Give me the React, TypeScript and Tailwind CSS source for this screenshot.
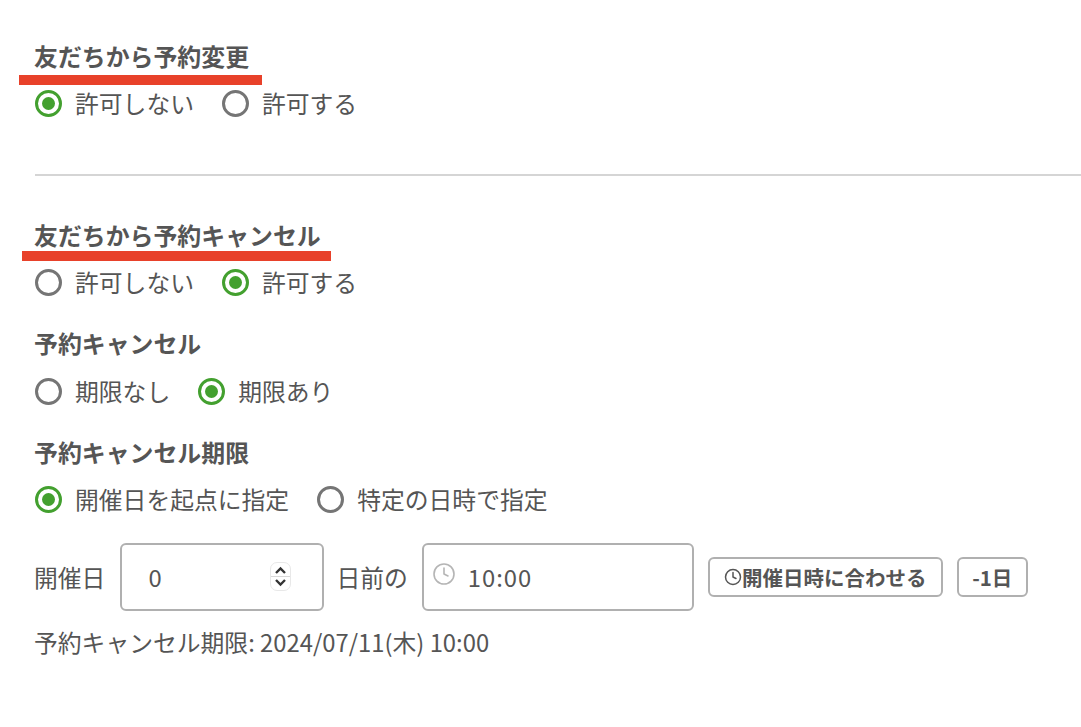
import { Clock } from 'lucide-react'

function Radio({ label, checked }: { label: string; checked?: boolean }) {
  return (
    <label className="flex items-center gap-[13px]">
      <span
        className={
          'flex h-[27px] w-[27px] items-center justify-center rounded-full border-[3px] ' +
          (checked ? 'border-[#43a02f]' : 'border-[#757575]')
        }
      >
        {checked && <span className="h-[13px] w-[13px] rounded-full bg-[#43a02f]" />}
      </span>
      <span>{label}</span>
    </label>
  )
}

function Title({ children }: { children: string }) {
  return <h3 className="-ml-[1px] h-[34px] text-[23.9px] leading-[34px] font-bold">{children}</h3>
}

export default function App() {
  return (
    <div className="relative h-[727px] w-[1081px] overflow-hidden bg-white pl-[35px] pt-[39px] text-[23.8px] leading-[34px] text-[#555555] [font-family:'Noto_Sans_CJK_JP',sans-serif]">
      <Title>友だちから予約変更</Title>
      <div className="mt-[13px] flex gap-[28px]">
        <Radio label="許可しない" checked />
        <Radio label="許可する" />
      </div>

      <div className="mt-[54px] h-[2px] bg-[#d5d5d5]" />

      <div className="mt-[42px]">
        <Title>友だちから予約キャンセル</Title>
      </div>
      <div className="mt-[13px] flex gap-[28px]">
        <Radio label="許可しない" />
        <Radio label="許可する" checked />
      </div>

      <div className="mt-[27px]">
        <Title>予約キャンセル</Title>
      </div>
      <div className="mt-[14px] flex gap-[28px]">
        <Radio label="期限なし" />
        <Radio label="期限あり" checked />
      </div>

      <div className="mt-[27px]">
        <Title>予約キャンセル期限</Title>
      </div>
      <div className="mt-[13px] flex gap-[28px]">
        <Radio label="開催日を起点に指定" checked />
        <Radio label="特定の日時で指定" />
      </div>

      <div className="mt-[27px] flex items-center">
        <span className="-ml-[1px]">開催日</span>
        <div className="ml-[15px] flex h-[68px] w-[204px] items-center justify-between rounded-[6px] border-2 border-[#b0b0b0] pl-[26px] pr-[31px]">
          <span>0</span>
          <span className="mb-[2px] flex h-[29px] w-[21px] flex-col items-center justify-center rounded-[7px] border border-[#e8e8e8] text-[#333333]">
            <svg width="13" height="9" viewBox="0 0 13 9" fill="none" stroke="currentColor" strokeWidth="2.4">
              <path d="M2 7l4.5-4.5L11 7" />
            </svg>
            <span className="my-[1px] h-px w-full bg-[#d8d8d8]" />
            <svg width="13" height="9" viewBox="0 0 13 9" fill="none" stroke="currentColor" strokeWidth="2.4">
              <path d="M2 2l4.5 4.5L11 2" />
            </svg>
          </span>
        </div>
        <span className="ml-[12px]">日前の</span>
        <div className="ml-[14px] flex h-[68px] w-[272px] items-center rounded-[6px] border-2 border-[#b0b0b0] pl-[8px]">
          <Clock size={24} strokeWidth={1.6} className="mb-[6px] text-[#b5b5b5]" />
          <span className="ml-[12px] tracking-[1px]">10:00</span>
        </div>
        <button className="ml-[14px] flex h-[40px] w-[235px] items-center justify-center rounded-[6px] border-2 border-[#b0b0b0] text-[20.5px] font-bold">
          <Clock size={18} strokeWidth={2} />
          開催日時に合わせる
        </button>
        <button className="ml-[14px] flex h-[40px] w-[71px] items-center justify-center rounded-[6px] border-2 border-[#b0b0b0] text-[20.5px] font-bold">
          -1日
        </button>
      </div>

      <p className="-ml-[1px] mt-[14px]">予約キャンセル期限: 2024/07/11(木) 10:00</p>

      <div className="absolute left-[19px] top-[75px] h-[10px] w-[243px] bg-[#e8412a]" />
      <div className="absolute left-[22px] top-[251px] h-[10px] w-[309px] bg-[#e8412a]" />
    </div>
  )
}
